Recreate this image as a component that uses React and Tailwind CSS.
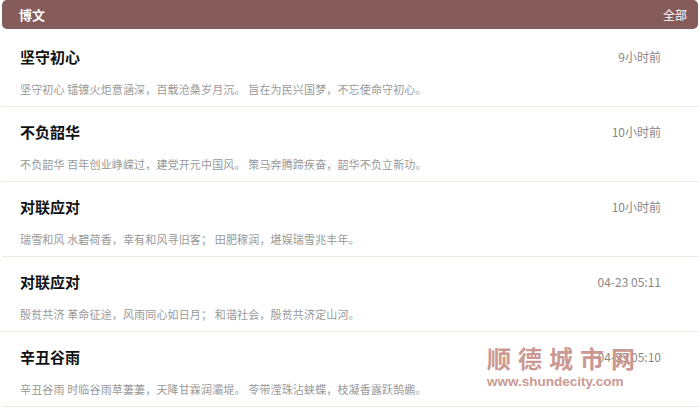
import React from "react";

const posts = [
  { title: "坚守初心", time: "9小时前", desc: "坚守初心 镭镀火炬意涵深，百载沧桑岁月沉。 旨在为民兴国梦，不忘使命守初心。" },
  { title: "不负韶华", time: "10小时前", desc: "不负韶华 百年创业峥嵘过，建党开元中国风。 策马奔腾蹄疾奋，韶华不负立新功。" },
  { title: "对联应对", time: "10小时前", desc: "瑞雪和风 水碧荷香，幸有和风寻旧客； 田肥稼润，堪娱瑞雪兆丰年。" },
  { title: "对联应对", time: "04-23 05:11", desc: "殷贫共济 革命征途，风雨同心如日月； 和谐社会，殷贫共济定山河。" },
  { title: "辛丑谷雨", time: "04-23 05:10", desc: "辛丑谷雨 时临谷雨草萋萋，天降甘霖润灞堤。 苓带滢珠沾蛱蝶，枝凝香露跃鹄鹕。" },
];

const font = { fontFamily: '"Noto Sans CJK SC", "Liberation Sans", sans-serif' };

export default function App() {
  return (
    <div className="relative w-[700px] h-[409px] bg-white overflow-hidden" style={font}>
      <div className="mx-[2px] h-[29px] mb-[3px] rounded-[5px] bg-[#865c5a] flex items-center justify-between pl-[17px] pr-[11px] text-white">
        <span className="text-[13px] font-bold">博文</span>
        <span className="text-[12px]">全部</span>
      </div>
      {posts.map((p, i) => (
        <div key={i} className="mx-[2px] h-[75px] border-b border-[#ecebdf] pl-[18px] pr-[37px] pt-[15px]">
          <div className="flex items-center justify-between h-[20px]">
            <span className="text-[15px] font-bold text-[#111]">{p.title}</span>
            <span className="text-[12px] text-[#888]">{p.time}</span>
          </div>
          <div className="mt-[13px] text-[11px] leading-[18px] text-[#999] tracking-[0.15px]">{p.desc}</div>
        </div>
      ))}
      <div className="absolute left-[487px] top-[346px] text-[#c68f87] opacity-90 leading-none pointer-events-none">
        <div className="text-[24px] font-bold tracking-[7px]">顺德城市网</div>
        <div className="mt-[5px] text-[13.5px] font-bold" style={{ fontFamily: '"Liberation Sans", sans-serif' }}>www.shundecity.com</div>
      </div>
    </div>
  );
}
